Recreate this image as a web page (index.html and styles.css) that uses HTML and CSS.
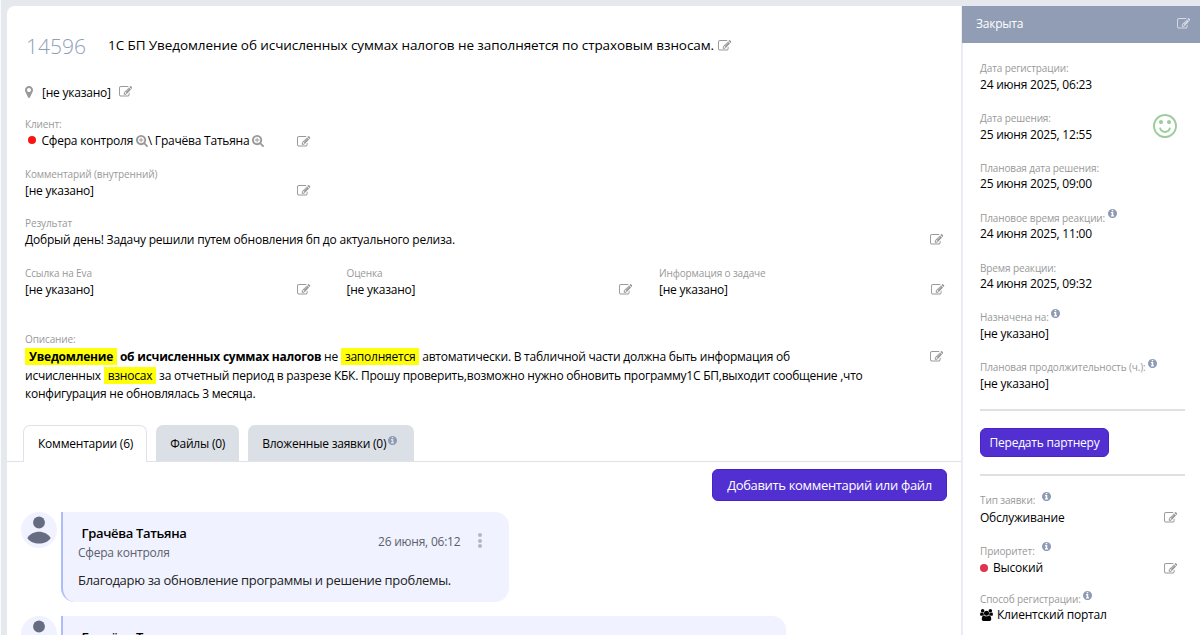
FILE: index.html
```html
<!DOCTYPE html>
<html lang="ru">
<head>
    <meta charset="UTF-8">
    <meta name="viewport" content="width=device-width, initial-scale=1.0">
    <title>Заявка 14596</title>
    <link rel="stylesheet" href="styles.css">
</head>
<body>
    <svg class="sprite" width="0" height="0">
        <symbol id="i-edit" viewBox="0 0 1792 1792"><path d="M888 1184l116-116-152-152-116 116v56h96v96h56zm440-720q-16-16-33 1l-350 350q-17 17-1 33t33-1l350-350q17-17 1-33zm80 594v190q0 119-84.5 203.5t-203.5 84.5h-832q-119 0-203.5-84.5t-84.5-203.5v-832q0-119 84.5-203.5t203.5-84.5h832q63 0 117 25 15 7 18 23 3 17-9 29l-49 49q-14 14-32 8-23-6-45-6h-832q-66 0-113 47t-47 113v832q0 66 47 113t113 47h832q66 0 113-47t47-113v-126q0-13 9-22l64-64q15-15 35-7t20 29zm-96-738l288 288-672 672h-288v-288zm444 132l-92 92-288-288 92-92q28-28 68-28t68 28l152 152q28 28 28 68t-28 68z"/></symbol>
        <symbol id="i-info" viewBox="128 128 1536 1536"><path d="M1152 1376v-160q0-14-9-23t-23-9h-96v-512q0-14-9-23t-23-9h-320q-14 0-23 9t-9 23v160q0 14 9 23t23 9h96v320h-96q-14 0-23 9t-9 23v160q0 14 9 23t23 9h448q14 0 23-9t9-23zm-128-896v-160q0-14-9-23t-23-9h-192q-14 0-23 9t-9 23v160q0 14 9 23t23 9h192q14 0 23-9t9-23zm640 416q0 209-103 385.5t-279.5 279.5-385.5 103-385.5-103-279.5-279.5-103-385.5 103-385.5 279.5-279.5 385.5-103 385.5 103 279.5 279.5 103 385.5z"/></symbol>
        <symbol id="i-marker" viewBox="384 128 1024 1536"><path d="M1152 640q0-106-75-181t-181-75-181 75-75 181 75 181 181 75 181-75 75-181zm256 0q0 109-33 179l-364 774q-16 33-47.5 52t-67.5 19-67.5-19-46.5-52l-365-774q-33-70-33-179 0-212 150-362t362-150 362 150 150 362z"/></symbol>
        <symbol id="i-zoom" viewBox="64 128 1664 1664"><path d="M1088 800v64q0 13-9.500 22.500t-22.500 9.500h-224v224q0 13-9.500 22.500t-22.500 9.500h-64q-13 0-22.500-9.500t-9.500-22.500v-224h-224q-13 0-22.500-9.500t-9.500-22.500v-64q0-13 9.500-22.500t22.500-9.500h224v-224q0-13 9.500-22.500t22.500-9.500h64q13 0 22.500 9.500t9.500 22.500v224h224q13 0 22.500 9.500t9.500 22.500zm128 32q0-185-131.500-316.500t-316.500-131.500-316.500 131.500-131.500 316.500 131.500 316.500 316.500 131.500 316.500-131.500 131.500-316.500zm512 832q0 53-37.500 90.500t-90.500 37.500q-54 0-90-38l-343-342q-179 124-399 124-143 0-273.500-55.500t-225-150-150-225-55.500-273.500 55.500-273.500 150-225 225-150 273.500-55.500 273.500 55.500 225 150 150 225 55.500 273.500q0 220-124 399l343 343q37 37 37 90z"/></symbol>
        <symbol id="i-smile" viewBox="128 128 1536 1536"><path d="M1262 1075q-37 121-138 195t-228 74-228-74-138-195q-8-25 4-48.500t38-31.500q25-8 48.500 4t31.500 38q25 80 92.500 129.500t151.500 49.500 151.500-49.500 92.500-129.500q8-26 32-38t49-4 37 31.500 4 48.500zm-494-435q0 53-37.500 90.500t-90.500 37.500-90.500-37.500-37.500-90.500 37.500-90.500 90.500-37.500 90.500 37.500 37.500 90.500zm512 0q0 53-37.500 90.500t-90.500 37.500-90.500-37.500-37.500-90.500 37.500-90.500 90.500-37.500 90.500 37.500 37.500 90.500zm256 256q0-130-51-248.500t-136.500-204-204-136.500-248.500-51-248.500 51-204 136.500-136.500 204-51 248.500 51 248.500 136.500 204 204 136.500 248.500 51 248.500-51 204-136.500 136.500-204 51-248.500zm128 0q0 209-103 385.500t-279.500 279.500-385.500 103-385.500-103-279.500-279.500-103-385.500 103-385.500 279.500-279.500 385.500-103 385.500 103 279.500 279.500 103 385.500z"/></symbol>
        <symbol id="i-users" viewBox="-64 0 1920 1792"><path d="M529 896q-162 5-265 128h-134q-82 0-138-40.500t-56-118.500q0-353 124-353 6 0 43.500 21t97.500 42.500 119 21.500q67 0 133-23-5 37-5 66 0 139 81 256zm1071 637q0 120-73 189.500t-194 69.500h-874q-121 0-194-69.500t-73-189.500q0-53 3.500-103.500t14-109 26.500-108.500 43-97.500 62-81 85.500-53.500 111.500-20q10 0 43 21.500t73 48 107 48 135 21.500 135-21.500 107-48 73-48 43-21.500q61 0 111.500 20t85.500 53.500 62 81 43 97.500 26.500 108.500 14 109 3.500 103.500zm-1024-1277q0 106-75 181t-181 75-181-75-75-181 75-181 181-75 181 75 75 181zm704 384q0 159-112.500 271.500t-271.500 112.500-271.500-112.500-112.500-271.500 112.500-271.500 271.500-112.500 271.500 112.500 112.500 271.500zm576 225q0 78-56 118.500t-138 40.500h-134q-103-123-265-128 81-117 81-256 0-29-5-66 66 23 133 23 59 0 119-21.500t97.500-42.500 43.500-21q124 0 124 353zm-128-609q0 106-75 181t-181 75-181-75-75-181 75-181 181-75 181 75 75 181z"/></symbol>
        <symbol id="i-avatar" viewBox="0 0 36 36"><circle cx="18" cy="10.500" r="5.900"/><path d="M6.300 26C9 22 13.200 19.800 18 19.800S27 22 29.700 26C27 30 23 31.500 18 31.500S9 30 6.300 26z"/></symbol>
    </svg>

    <div class="page">
        <main class="ticket">
            <div class="ticket-head">
                <span class="ticket-number">14596</span>
                <h1 class="ticket-title">1С БП Уведомление об исчисленных суммах налогов не заполняется по страховым взносам.</h1>
                <svg class="icon edit"><use href="#i-edit"/></svg>
            </div>

            <div class="place">
                <svg class="icon marker"><use href="#i-marker"/></svg>
                <span>[не указано]</span>
                <svg class="icon edit"><use href="#i-edit"/></svg>
            </div>

            <div class="fields">
                <div class="field">
                    <div class="label">Клиент:</div>
                    <div class="value">
                        <span class="client"><i class="dot"></i>Сфера контроля<svg class="icon zoom"><use href="#i-zoom"/></svg><span class="slash">\</span>Грачёва Татьяна<svg class="icon zoom"><use href="#i-zoom"/></svg></span>
                        <svg class="icon edit"><use href="#i-edit"/></svg>
                    </div>
                </div>
                <div class="field">
                    <div class="label">Комментарий (внутренний)</div>
                    <div class="value">[не указано]<svg class="icon edit"><use href="#i-edit"/></svg></div>
                </div>
                <div class="field wide">
                    <div class="label">Результат</div>
                    <div class="value">Добрый день! Задачу решили путем обновления бп до актуального релиза.<svg class="icon edit"><use href="#i-edit"/></svg></div>
                </div>
                <div class="columns">
                    <div class="field">
                        <div class="label">Ссылка на Eva</div>
                        <div class="value">[не указано]<svg class="icon edit"><use href="#i-edit"/></svg></div>
                    </div>
                    <div class="field">
                        <div class="label">Оценка</div>
                        <div class="value">[не указано]<svg class="icon edit"><use href="#i-edit"/></svg></div>
                    </div>
                    <div class="field">
                        <div class="label">Информация о задаче</div>
                        <div class="value">[не указано]<svg class="icon edit"><use href="#i-edit"/></svg></div>
                    </div>
                </div>
                <div class="field wide description">
                    <div class="label">Описание:</div>
                    <div class="description-row">
                        <p class="text"><b><mark>Уведомление</mark> об исчисленных суммах налогов</b> не <mark>заполняется</mark> автоматически. В табличной части должна быть информация об<br>исчисленных <mark>взносах</mark> за отчетный период в разрезе КБК. Прошу проверить,возможно нужно обновить программу1С БП,выходит сообщение ,что<br>конфигурация не обновлялась 3 месяца.</p>
                        <svg class="icon edit"><use href="#i-edit"/></svg>
                    </div>
                </div>
            </div>

            <nav class="tabs">
                <a class="tab active">Комментарии (6)</a>
                <a class="tab">Файлы (0)</a>
                <a class="tab">Вложенные заявки (0)<svg class="icon info"><use href="#i-info"/></svg></a>
            </nav>

            <div class="actions">
                <button class="btn btn-add">Добавить комментарий или файл</button>
            </div>

            <div class="comments">
                <div class="comment">
                    <div class="avatar"><svg><use href="#i-avatar"/></svg></div>
                    <div class="bubble">
                        <div class="comment-head">
                            <div class="author">
                                <div class="name">Грачёва Татьяна</div>
                                <div class="company">Сфера контроля</div>
                            </div>
                            <span class="date">26 июня, 06:12</span>
                            <div class="menu"><i></i><i></i><i></i></div>
                        </div>
                        <div class="message">Благодарю за обновление программы и решение проблемы.</div>
                    </div>
                </div>
                <div class="comment">
                    <div class="avatar"><svg><use href="#i-avatar"/></svg></div>
                    <div class="bubble long">
                        <div class="comment-head">
                            <div class="author">
                                <div class="name">Грачёва Татьяна</div>
                            </div>
                        </div>
                    </div>
                </div>
            </div>
        </main>

        <aside class="sidebar">
            <div class="status">
                <span>Закрыта</span>
                <svg class="icon edit"><use href="#i-edit"/></svg>
            </div>
            <div class="side-body">
                <div class="side-field">
                    <div class="label">Дата регистрации:</div>
                    <div class="value">24 июня 2025, 06:23</div>
                </div>
                <div class="side-field with-smile">
                    <div>
                        <div class="label">Дата решения:</div>
                        <div class="value">25 июня 2025, 12:55</div>
                    </div>
                    <svg class="smile"><use href="#i-smile"/></svg>
                </div>
                <div class="side-field">
                    <div class="label">Плановая дата решения:</div>
                    <div class="value">25 июня 2025, 09:00</div>
                </div>
                <div class="side-field">
                    <div class="label">Плановое время реакции:<svg class="icon info"><use href="#i-info"/></svg></div>
                    <div class="value">24 июня 2025, 11:00</div>
                </div>
                <div class="side-field">
                    <div class="label">Время реакции:</div>
                    <div class="value">24 июня 2025, 09:32</div>
                </div>
                <div class="side-field">
                    <div class="label">Назначена на:<svg class="icon info"><use href="#i-info"/></svg></div>
                    <div class="value">[не указано]</div>
                </div>
                <div class="side-field">
                    <div class="label">Плановая продолжительность (ч.):<svg class="icon info"><use href="#i-info"/></svg></div>
                    <div class="value">[не указано]</div>
                </div>
                <div class="partner">
                    <button class="btn btn-partner">Передать партнеру</button>
                </div>
                <div class="side-field type">
                    <div class="label">Тип заявки:<svg class="icon info spaced"><use href="#i-info"/></svg></div>
                    <div class="value">Обслуживание<svg class="icon edit"><use href="#i-edit"/></svg></div>
                </div>
                <div class="side-field priority">
                    <div class="label">Приоритет:<svg class="icon info spaced"><use href="#i-info"/></svg></div>
                    <div class="value"><span><i class="dot high"></i>Высокий</span><svg class="icon edit"><use href="#i-edit"/></svg></div>
                </div>
                <div class="side-field source">
                    <div class="label">Способ регистрации:<svg class="icon info"><use href="#i-info"/></svg></div>
                    <div class="value"><span><svg class="icon users"><use href="#i-users"/></svg>Клиентский портал</span></div>
                </div>
            </div>
        </aside>
    </div>
</body>
</html>
```
FILE: styles.css
```css
* {
    box-sizing: border-box;
}

body {
    margin: 0;
    height: 635px;
    overflow: hidden;
    background: #e5e8ed;
    border-left: 1px solid #fafbfc;
    font-family: "Open Sans", "Noto Sans", sans-serif;
    font-size: 12px;
    letter-spacing: -0.22px;
    color: #000;
}

.sprite {
    position: absolute;
}

.page {
    display: flex;
    margin: 6px 0 0 6px;
    height: 629px;
    overflow: hidden;
}

.icon {
    flex: none;
    fill: #999;
}

.icon.edit {
    width: 13.5px;
    height: 13.5px;
}

.icon.info {
    width: 9px;
    height: 9px;
    fill: #8e9bb5;
}

/* main card */
.ticket {
    width: 955px;
    flex: none;
    background: #fff;
    border-right: 1px solid #ebebf3;
    border-top-left-radius: 8px;
}

.ticket-head {
    display: flex;
    align-items: center;
    height: 40px;
    margin-top: 20px;
    padding-left: 19px;
}

.ticket-number {
    width: 82px;
    font-size: 21px;
    font-weight: 300;
    letter-spacing: 0;
    color: #8ea0b8;
}

.ticket-title {
    margin: -2px 0 0;
    font-size: 13.5px;
    font-weight: 400;
    letter-spacing: -0.08px;
    white-space: nowrap;
}

.ticket-head .edit {
    margin-left: 4px;
}

.place {
    display: flex;
    align-items: center;
    height: 20px;
    margin-top: 16px;
    padding-left: 18px;
}

.marker {
    width: 8px;
    height: 12px;
    margin-right: 9px;
}

.place .edit {
    margin-left: 8px;
}

.fields {
    margin-top: 14px;
    padding-left: 18px;
}

.field {
    width: 285.5px;
    height: 49.5px;
}

.field.wide {
    width: 918px;
}

.label {
    display: flex;
    height: 16px;
    line-height: 16px;
    font-size: 10px;
    letter-spacing: -0.12px;
    color: #999;
    white-space: nowrap;
}

.value {
    display: flex;
    align-items: center;
    justify-content: space-between;
    height: 17px;
    line-height: 17px;
    white-space: nowrap;
}

.value .edit {
    margin-top: 1.5px;
}

.wide .value .edit {
    margin-top: 0;
}

.client {
    display: flex;
    align-items: center;
}

.dot {
    width: 8px;
    height: 8px;
    margin: -1px 6px 0 2.5px;
    border-radius: 50%;
    background: #fa1414;
}

.zoom {
    width: 12px;
    height: 12px;
    margin-left: 2.5px;
}

.slash {
    margin-right: 3px;
}

.columns {
    display: grid;
    grid-template-columns: 321.5px 312.5px 285px;
}

.description {
    height: auto;
    margin-top: 17px;
}

.description-row {
    display: flex;
    justify-content: space-between;
}

.description-row .edit {
    margin-top: 2.5px;
}

.text {
    margin: 0;
    padding-top: 1px;
    line-height: 18.5px;
    letter-spacing: -0.235px;
    white-space: nowrap;
}

mark {
    padding: 0 4px;
    background: #ffff0a;
    color: inherit;
}

.tabs {
    display: flex;
    height: 37px;
    margin-top: 21px;
    padding-left: 16px;
    border-bottom: 1px solid #dfe3e9;
}

.tab {
    height: 36px;
    margin-right: 9px;
    padding: 0 14px;
    border-radius: 7px 7px 0 0;
    background: #dbdfe6;
    line-height: 37px;
    display: flex;
    white-space: nowrap;
}

.tab.active {
    height: 37px;
    padding: 0 13px 0 14px;
    border: 1px solid #dfe3e9;
    border-bottom: 0;
    background: #fff;
    line-height: 35px;
}

.tab .info {
    margin: 11px 3px 0 2px;
}

.actions {
    display: flex;
    justify-content: flex-end;
    padding: 7px 14px 0 0;
}

.btn {
    border: 1px solid #4622cc;
    border-radius: 6px;
    background: #512fd1;
    color: #fff;
    font-family: inherit;
    white-space: nowrap;
    padding: 0;
}

.btn-add {
    width: 235px;
    height: 32px;
    font-size: 13px;
    letter-spacing: -0.34px;
}

.comments {
    padding: 11px 0 0 14px;
}

.comment {
    display: flex;
    margin-bottom: 14px;
}

.avatar {
    width: 36px;
    height: 36px;
    margin-right: 4px;
    border-radius: 50%;
    background: #f0f3ff;
}

.avatar svg {
    display: block;
    width: 36px;
    height: 36px;
    fill: #666c82;
}

.bubble {
    width: 448px;
    height: 90px;
    padding: 12px 0 0 15px;
    border-left: 2px solid #adbdfb;
    border-radius: 0 14px 14px 14px;
    background: #f0f3ff;
}

.bubble.long {
    width: 725px;
}

.comment-head {
    display: flex;
    align-items: center;
}

.author {
    width: 300px;
}

.name {
    padding-left: 3.5px;
    font-size: 13px;
    font-weight: 600;
    letter-spacing: -0.33px;
    line-height: 18px;
}

.company {
    line-height: 21px;
    color: #5b606b;
}

.date {
    width: 83px;
    margin-top: -3px;
    color: #5b606b;
    white-space: nowrap;
}

.menu {
    display: flex;
    flex-direction: column;
    gap: 1.5px;
    margin: -5px 0 0 17px;
}

.menu i {
    width: 4px;
    height: 4px;
    border-radius: 50%;
    background: #b4b6c8;
}

.message {
    margin-top: 8px;
    font-size: 13px;
    letter-spacing: -0.32px;
    line-height: 18px;
    color: #222;
    white-space: nowrap;
}

/* right panel */
.sidebar {
    flex: 1;
    background: #fff;
}

.status {
    display: flex;
    align-items: center;
    justify-content: space-between;
    height: 37px;
    padding: 0 10px 2px 14px;
    background: #919db5;
    color: #fff;
}

.status .edit {
    fill: #d5dae3;
}

.side-body {
    height: 592px;
    padding: 17px 15px 0 17px;
    border-left: 1px solid #ebebf3;
}

.side-field {
    height: 49.9px;
}

.side-field .value {
    margin-top: -0.3px;
}

.with-smile {
    display: flex;
    justify-content: space-between;
}

.smile {
    width: 24px;
    height: 24px;
    margin: 4px 8px 0 0;
    fill: #9ccc9c;
}

.label .info {
    margin: -0.5px 0 0 2.5px;
}

.label .info.spaced {
    margin-left: 7px;
}

.partner {
    height: 67px;
    padding-top: 17px;
    border-top: 2px solid #e0e0e0;
    border-bottom: 2px solid #e0e0e0;
}

.btn-partner {
    display: block;
    width: 129px;
    height: 29px;
    font-size: 12px;
    letter-spacing: -0.22px;
}

.side-field .edit {
    margin-right: 8px;
}

.side-field.type {
    height: 50.4px;
    margin-top: 16px;
}

.side-field.type .value,
.side-field.priority .value {
    margin-top: 0.5px;
}

.source {
    margin-top: -1.5px;
}

.side-field.source .value {
    margin-top: -1.5px;
}

.high {
    display: inline-block;
    margin: 0 5px 0 0;
    background: #e2334c;
}

.users {
    width: 13px;
    height: 12px;
    margin-right: 4px;
    fill: #000;
    vertical-align: -2px;
}
```
